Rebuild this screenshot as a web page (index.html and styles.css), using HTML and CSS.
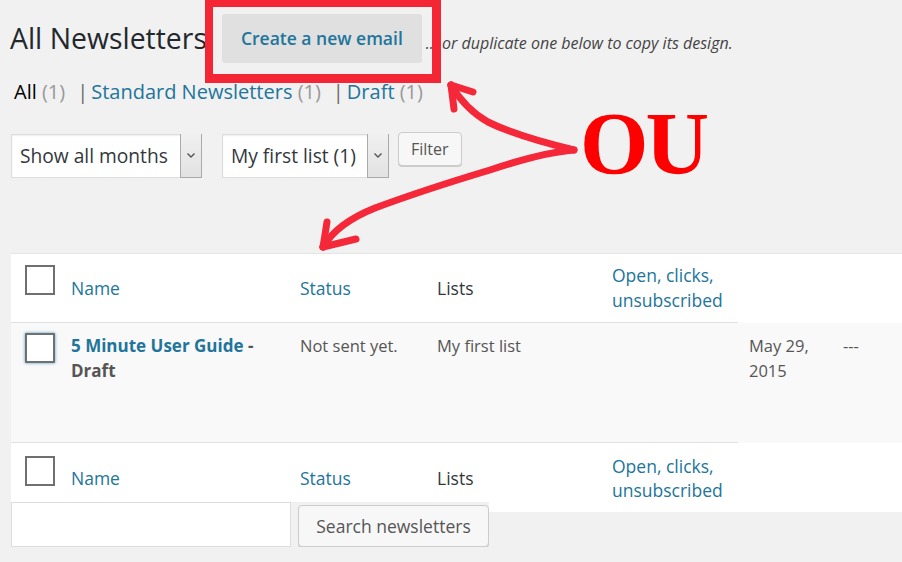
FILE: index.html
```html
<!DOCTYPE html>
<html>
<head>
	<meta charset="utf-8">
	<title>All Newsletters</title>
	<link rel="stylesheet" href="styles.css">
</head>
<body>
	<div class="wrap">
		<div class="page-head">
			<h2>All Newsletters</h2>
			<a href="#" class="add-new">Create a new email</a>
			<span class="hint">... or duplicate one below to copy its design.</span>
		</div>

		<ul class="subsubsub">
			<li class="current">All <span class="count">(1)</span></li>
			<li class="sep">|</li>
			<li><a href="#">Standard Newsletters</a> <span class="count">(1)</span></li>
			<li class="sep">|</li>
			<li><a href="#">Draft</a> <span class="count">(1)</span></li>
		</ul>

		<div class="tablenav">
			<div class="select sel-months">
				<span class="label">Show all months</span>
				<span class="arrow"><svg width="10" height="7" viewBox="0 0 10 7"><path d="M1.5 1.5 L5 5 L8.5 1.5" fill="none" stroke="#555" stroke-width="1.4"/></svg></span>
			</div>
			<div class="select sel-list">
				<span class="label">My first list (1)</span>
				<span class="arrow"><svg width="10" height="7" viewBox="0 0 10 7"><path d="M1.5 1.5 L5 5 L8.5 1.5" fill="none" stroke="#555" stroke-width="1.4"/></svg></span>
			</div>
			<button class="btn btn-filter">Filter</button>
		</div>

		<table class="list">
			<colgroup>
				<col class="c-cb"><col class="c-name"><col class="c-status"><col class="c-lists"><col class="c-open"><col class="c-date"><col class="c-extra">
			</colgroup>
			<thead>
				<tr>
					<th class="cb line"><span class="box"></span></th>
					<th class="line"><a href="#">Name</a></th>
					<th class="line"><a href="#">Status</a></th>
					<th class="line">Lists</th>
					<th class="line"><a href="#">Open, clicks,<br>unsubscribed</a></th>
					<th></th>
					<th></th>
				</tr>
			</thead>
			<tbody>
				<tr class="row">
					<td class="cb line"><span class="box focus"></span></td>
					<td class="line title"><a href="#">5 Minute User Guide</a> -<br>Draft</td>
					<td class="line">Not sent yet.</td>
					<td class="line">My first list</td>
					<td class="line"></td>
					<td>May 29,<br>2015</td>
					<td>---</td>
				</tr>
			</tbody>
			<tfoot>
				<tr>
					<th class="cb"><span class="box"></span></th>
					<th><a href="#">Name</a></th>
					<th><a href="#">Status</a></th>
					<th>Lists</th>
					<th><a href="#">Open, clicks,<br>unsubscribed</a></th>
					<th></th>
					<th></th>
				</tr>
			</tfoot>
		</table>

		<form class="search-box">
			<input type="search" class="search-input">
			<button type="button" class="btn btn-search">Search newsletters</button>
		</form>
	</div>

	<!-- annotations drawn on top of the screenshot -->
	<div class="mark-box"></div>
	<div class="mark-ou">OU</div>
	<svg class="mark-arrows" width="902" height="562" viewBox="0 0 902 562">
		<g fill="none" stroke="#f5283a" stroke-width="7" stroke-linecap="round" stroke-linejoin="round">
			<path d="M574 150 C545 143 512 134 488 122 C472 113 460 100 451 85"/>
			<path d="M451 85 L473 92"/>
			<path d="M451 85 L454 109"/>
			<path d="M574 150 C548 152 520 160 490 170 C450 182 410 195 375 208 C350 218 333 230 323 247"/>
			<path d="M323 247 L327 222"/>
			<path d="M323 247 L356 239"/>
		</g>
	</svg>
</body>
</html>
```

FILE: styles.css
```css
body {
	margin: 0;
	background: #f1f1f1;
	font-family: "Open Sans", "Noto Sans", sans-serif;
	color: #444;
	overflow: hidden;
}
a { color: #21759b; text-decoration: none; }

.wrap { position: relative; }

/* title line */
.page-head {
	display: flex;
	align-items: center;
	padding: 14px 0 0 10px;
	height: 49px;
	white-space: nowrap;
}
.page-head h2 {
	margin: 0 15px 0 0;
	font-size: 28.4px;
	font-weight: 400;
	color: #23282d;
	position: relative;
	top: -1px;
}
.add-new {
	display: block;
	height: 49px;
	line-height: 49px;
	padding: 0 19px;
	background: #e0e0e0;
	border-radius: 3px;
	font-size: 17.5px;
	font-weight: 600;
	color: #21759b;
}
.hint {
	margin-left: 4px;
	font-size: 16px;
	font-style: italic;
	color: #444;
	position: relative;
	top: 4px;
}

/* views */
.subsubsub {
	list-style: none;
	display: flex;
	margin: 16px 0 0 14px;
	padding: 0;
	font-size: 20px;
	line-height: 26px;
}
.subsubsub li { white-space: pre; }
.subsubsub .current { color: #000; }
.subsubsub .count { color: #999; }
.subsubsub .sep { color: #666; margin: 0 3px 0 12px; }

/* filters */
.tablenav {
	display: flex;
	align-items: flex-start;
	margin: 27px 0 0 11px;
	height: 121px;
	white-space: nowrap;
}
.select {
	display: flex;
	height: 42px;
	border: 1px solid #ddd;
	background: #fff;
	box-shadow: inset 0 1px 2px rgba(0,0,0,.07);
	margin-top: 2px;
}
.select .label {
	flex: 1;
	padding: 0 0 0 8px;
	line-height: 42px;
	font-size: 19.2px;
	color: #32373c;
	overflow: hidden;
}
.select .arrow {
	width: 20px;
	display: flex;
	align-items: center;
	justify-content: center;
	background: linear-gradient(#f0f0f0, #e2e2e2);
	border-left: 1px solid #aaa;
	margin: -1px -1px -1px 0;
	border-right: 1px solid #aaa;
	border-bottom: 1px solid #aaa;
}
.sel-months { width: 189px; margin-right: 20px; }
.sel-list { width: 165px; margin-right: 9px; }

.btn {
	font-family: inherit;
	background: #f7f7f7;
	border: 1px solid #ccc;
	border-radius: 4px;
	box-shadow: 0 1px 0 #ccc;
	color: #555;
	cursor: pointer;
	white-space: nowrap;
	flex-shrink: 0;
}
.btn-filter {
	height: 34px;
	font-size: 16px;
	padding: 0 12px;
}

/* list table */
.list {
	width: 920px;
	margin-left: 11px;
	border-collapse: collapse;
	background: #fff;
	border-top: 1px solid #e5e5e5;
	table-layout: fixed;
}
.c-cb { width: 49px; }
.c-name { width: 229px; }
.c-status { width: 137px; }
.c-lists { width: 175px; }
.c-open { width: 137px; }
.c-date { width: 94px; }
.c-extra { width: 99px; }

.list th, .list td {
	text-align: left;
	padding: 8px 11px;
	font-weight: 400;
}
.list thead th, .list tfoot th {
	height: 49px;
	font-size: 17.5px;
	line-height: 25px;
	color: #32373c;
	vertical-align: middle;
}
.list tfoot th { padding-bottom: 7px; line-height: 24px; }
.list thead .line { border-bottom: 1px solid #e1e1e1; }
.list .row td {
	height: 99px;
	padding: 10px 11px;
	vertical-align: top;
	background: #f9f9f9;
	font-size: 16.5px;
	line-height: 25px;
	color: #555;
}
.list .row td.line { border-bottom: 1px solid #e1e1e1; }
.list .row .title { font-size: 17px; font-weight: 700; }
.list .cb { padding-left: 14px; vertical-align: top; }
.list thead .cb { padding-top: 11px; }
.list .row .cb { padding: 10px 0 0 14px; }
.list tfoot .cb { padding-top: 13px; }

.box {
	display: block;
	width: 26px;
	height: 26px;
	border: 2px solid #707070;
	background: #fff;
}
.box.focus { box-shadow: 0 0 3px rgba(30,140,190,.8); }

/* search */
.search-box {
	display: flex;
	margin: -10px 0 0 11px;
	width: 478px;
	background: #f1f1f1;
	align-items: flex-start;
}
.search-input {
	width: 280px;
	height: 45px;
	box-sizing: border-box;
	border: 1px solid #ddd;
	background: #fff;
	margin: 0 7px 0 0;
	flex-shrink: 0;
}
.btn-search {
	width: 191px;
	height: 42px;
	margin-top: 3px;
	font-size: 17.5px;
	padding: 0;
}

/* red annotations */
.mark-box {
	position: absolute;
	left: 205px;
	top: 0;
	width: 219px;
	height: 67px;
	border: solid #f42535;
	border-width: 7px 9px 9px 8px;
}
.mark-ou {
	position: absolute;
	left: 580px;
	top: 100px;
	font-family: "Liberation Serif", "Times New Roman", serif;
	font-weight: 700;
	font-size: 88px;
	line-height: 88px;
	letter-spacing: -3px;
	color: #fe0000;
}
.mark-arrows {
	position: absolute;
	left: 0;
	top: 0;
}
```
